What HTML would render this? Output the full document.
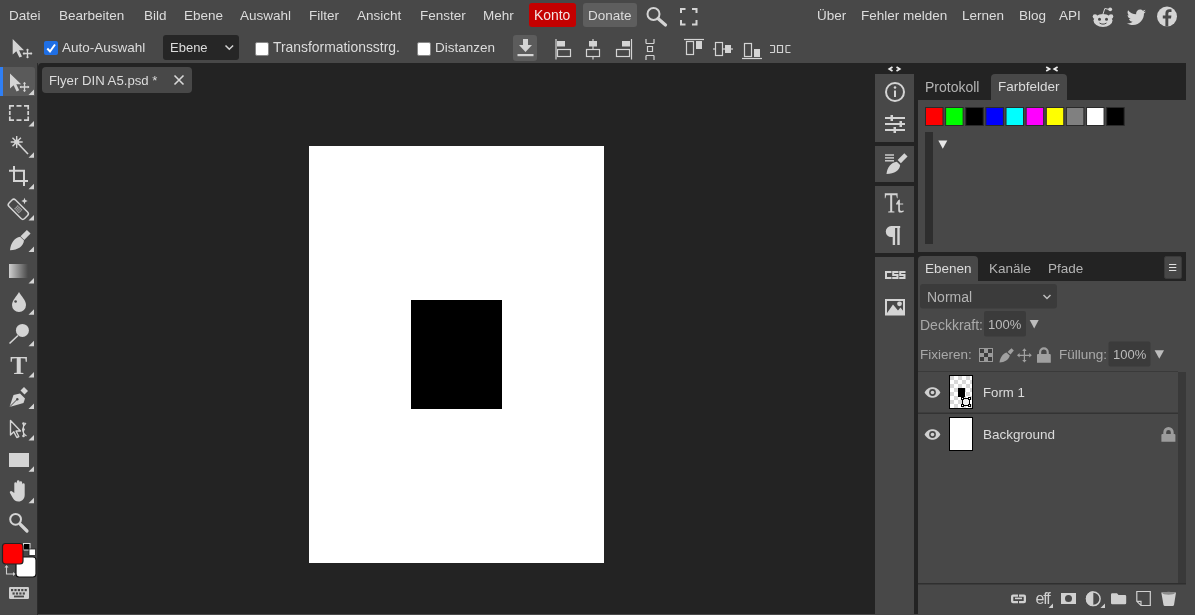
<!DOCTYPE html>
<html><head><meta charset="utf-8">
<style>
*{box-sizing:border-box;margin:0;padding:0}
html,body{width:1195px;height:615px;overflow:hidden}
body{position:relative;background:#484848;font-family:"Liberation Sans",sans-serif;color:#dcdcdc;font-size:13.5px}
.a{position:absolute}
.t{position:absolute;white-space:nowrap;line-height:1;will-change:transform}
svg{position:absolute;overflow:visible;will-change:transform}
#dark{position:absolute;left:38px;top:63px;width:1157px;height:551px;background:#232323;border-top-left-radius:4px}
</style></head><body>

<!-- MENU BAR -->
<div class="t" style="left:9px;top:9px">Datei</div>
<div class="t" style="left:59px;top:9px">Bearbeiten</div>
<div class="t" style="left:144px;top:9px">Bild</div>
<div class="t" style="left:184px;top:9px">Ebene</div>
<div class="t" style="left:240px;top:9px">Auswahl</div>
<div class="t" style="left:309px;top:9px">Filter</div>
<div class="t" style="left:357px;top:9px">Ansicht</div>
<div class="t" style="left:420px;top:9px">Fenster</div>
<div class="t" style="left:483px;top:9px">Mehr</div>
<div class="a" style="left:529px;top:3px;width:47px;height:24px;background:#c40000;border-radius:3px"></div>
<div class="t" style="left:533.5px;top:9px;color:#f4e4e4;font-size:13.9px">Konto</div>
<div class="a" style="left:583px;top:3px;width:54px;height:24px;background:#5e5e5e;border-radius:3px"></div>
<div class="t" style="left:588px;top:9px">Donate</div>

<div class="t" style="left:817px;top:9px">Über</div>
<div class="t" style="left:861px;top:9px">Fehler melden</div>
<div class="t" style="left:962px;top:9px">Lernen</div>
<div class="t" style="left:1019px;top:9px">Blog</div>
<div class="t" style="left:1059px;top:9px">API</div>

<!-- OPTIONS BAR -->
<div class="a" style="left:44px;top:41px;width:14px;height:14px;background:#1f6fe5;border-radius:2px"></div>
<div class="t" style="left:62px;top:41px">Auto-Auswahl</div>
<div class="a" style="left:163px;top:35px;width:76px;height:25px;background:#262626;border-radius:3px"></div>
<div class="t" style="left:170px;top:41px;font-size:13px">Ebene</div>
<div class="a" style="left:255px;top:42px;width:14px;height:14px;background:#fff;border:1px solid #888;border-radius:2px"></div>
<div class="t" style="left:273px;top:41px;font-size:13.9px">Transformationsstrg.</div>
<div class="a" style="left:417px;top:42px;width:14px;height:14px;background:#fff;border:1px solid #888;border-radius:2px"></div>
<div class="t" style="left:435px;top:41px">Distanzen</div>
<div class="a" style="left:513px;top:35px;width:24px;height:26px;background:#5c5c5c;border-radius:3px"></div>


<!-- LEFT TOOLBAR ICONS -->
<svg width="38" height="615" style="left:0;top:0" viewBox="0 0 38 615">
<rect x="0" y="67" width="3" height="29" fill="#2f7ff5"/>
<path d="M3 67H32a3 3 0 0 1 3 3V96H3z" fill="#5a5a5a"/>
<g fill="#d4d4d4">
<path id="tri" d="M34 89.5V95H28.5z"/>
</g>
<g fill="#d4d4d4" id="tris">
<path d="M34 120.9V126.4H28.5z"/><path d="M34 152.3V157.8H28.5z"/><path d="M34 183.7V189.2H28.5z"/>
<path d="M34 215.1V220.6H28.5z"/><path d="M34 246.5V252H28.5z"/><path d="M34 277.9V283.4H28.5z"/>
<path d="M34 309.3V314.8H28.5z"/><path d="M34 340.7V346.2H28.5z"/><path d="M34 372.1V377.6H28.5z"/>
<path d="M34 403.5V409H28.5z"/><path d="M34 434.9V440.4H28.5z"/><path d="M34 466.3V471.8H28.5z"/>
<path d="M34 497.7V503.2H28.5z"/>
</g>
<!-- move -->
<path d="M10 73.5V88.5L13.6 85.2L16.6 91.5L19.2 90.3L16.3 84.3H21.2Z" fill="#d4d4d4"/>
<path d="M24.5 82.5V91.5M20 87H29" stroke="#d4d4d4" stroke-width="1.3" fill="none"/>
<path d="M24.5 82l-1.6 1.8h3.2zM24.5 92l-1.6-1.8h3.2zM19.5 87l1.8-1.6v3.2zM29.5 87l-1.8-1.6v3.2z" fill="#d4d4d4"/>
<!-- marquee -->
<path d="M9.8 109.5V105.8H14M16.5 105.8H21.5M24 105.8H28.2V109.5M28.2 111V115M28.2 116.5V120.2H24M21.5 120.2H16.5M14 120.2H9.8V116.5M9.8 115V111" fill="none" stroke="#d4d4d4" stroke-width="1.7"/>
<!-- wand -->
<path d="M16.7 136V148M10.7 142H22.7M12.5 137.8L20.9 146.2M20.9 137.8L12.5 146.2" stroke="#d4d4d4" stroke-width="1.4"/>
<circle cx="16.7" cy="142" r="2.5" fill="#d4d4d4"/>
<path d="M18 143.5L28 154" stroke="#d4d4d4" stroke-width="1.6"/>
<!-- crop -->
<path d="M14 166V181H28M9 170.7H24V186" stroke="#d4d4d4" stroke-width="2" fill="none"/>
<!-- heal -->
<g transform="translate(18.3 209.3) rotate(-45)">
<rect x="-4.6" y="-11" width="9.2" height="22" rx="2.5" fill="none" stroke="#d4d4d4" stroke-width="1.5"/>
<rect x="-2.6" y="-3.4" width="5.2" height="6.8" fill="#9a9a9a"/>
<path d="M-2.6 -1.7H2.6M-2.6 0H2.6M-2.6 1.7H2.6M-0.9 -3.4V3.4M0.9 -3.4V3.4" stroke="#474747" stroke-width="0.5"/>
</g>
<path d="M24.5 197.8L25.4 200.1L27.7 201L25.4 201.9L24.5 204.2L23.6 201.9L21.3 201L23.6 200.1Z" fill="#d4d4d4"/>
<!-- brush -->
<g transform="translate(25.2 235.3) rotate(45)"><rect x="-2.6" y="-5" width="5.2" height="9" fill="#d4d4d4"/></g>
<path d="M20.2 236.8L24 240.6C23.5 246 18 250.3 10 250.3C10.5 243.5 14.5 237.5 20.2 236.8Z" fill="#d4d4d4"/>
<!-- gradient -->
<defs><linearGradient id="g1" x1="0" x2="1"><stop offset="0" stop-color="#cfcfcf"/><stop offset="1" stop-color="#484848"/></linearGradient></defs>
<rect x="9" y="264" width="19" height="14" fill="url(#g1)"/>
<!-- drop -->
<path d="M19 292C17 296 12 300 12 305A7 7 0 0 0 26 305C26 300 21 296 19 292Z" fill="#d4d4d4"/>
<circle cx="15.6" cy="301.5" r="1.3" fill="#474747"/>
<!-- dodge -->
<circle cx="22.4" cy="330.4" r="6.5" fill="#d4d4d4"/>
<path d="M18 335.5L9.5 343.5" stroke="#d4d4d4" stroke-width="1.6"/>
<!-- hand etc placeholders -->
<rect x="9" y="453" width="20" height="14" fill="#d4d4d4"/>
<!-- zoom -->
<circle cx="15.6" cy="519.3" r="5.4" fill="none" stroke="#d4d4d4" stroke-width="2"/>
<path d="M20.5 524.5L27 531" stroke="#d4d4d4" stroke-width="3.2" stroke-linecap="round"/>
<!-- type -->
<text x="18.8" y="374" font-family="Liberation Serif" font-size="25.5" font-weight="bold" fill="#d4d4d4" text-anchor="middle">T</text>
<!-- pen -->
<path d="M21.5 392.5L25 389L29 393L25.5 396.5Z" fill="#d4d4d4" transform="translate(-1 -2)"/>
<path d="M20 393.5L25 398.5L23.5 403L9.5 407L13.5 395Z" fill="#d4d4d4"/>
<path d="M9.5 407L17 399.5" stroke="#474747" stroke-width="1"/>
<circle cx="17.3" cy="399.2" r="1.2" fill="#474747"/>
<!-- path select -->
<path d="M10.5 420.5V435L13.8 431.8L16.8 437.5L18.8 436.5L16 431H20.5Z" fill="none" stroke="#d4d4d4" stroke-width="1.4" stroke-linejoin="round"/>
<path d="M23.5 423V436M26 423C22 427 21 432 26.5 436" stroke="#d4d4d4" stroke-width="1.1" fill="none"/>
<circle cx="23.5" cy="423.5" r="1.3" fill="#d4d4d4"/><circle cx="23.5" cy="429.5" r="1.3" fill="#d4d4d4"/><circle cx="23.5" cy="436" r="1.3" fill="#d4d4d4"/>
<!-- hand -->
<path d="M14.3 493V483.5a1.3 1.3 0 0 1 2.6 0V491V481.5a1.3 1.3 0 0 1 2.6 0V491V482.5a1.3 1.3 0 0 1 2.6 0V491.5V484.5a1.3 1.3 0 0 1 2.6 0V495C24.6 499 22 501.5 18.5 501.5C15.5 501.5 14 500 12.5 497.5L10 493a1.3 1.3 0 0 1 2.2-1.4Z" fill="#d4d4d4"/>
<!-- colors -->
<rect x="23.5" y="543.5" width="6.5" height="6.5" fill="#000" stroke="#ddd" stroke-width="1"/>
<rect x="29" y="549" width="6.5" height="6.5" fill="#fff" stroke="#222" stroke-width="0.8"/>
<rect x="16" y="557" width="20" height="20" rx="3" fill="#fff" stroke="#111" stroke-width="1.2"/>
<rect x="2.5" y="543.5" width="20.5" height="20.5" rx="3" fill="#f00" stroke="#222" stroke-width="1.2"/>
<path d="M6.5 566.5V574H14" stroke="#cfcfcf" stroke-width="1.1" fill="none"/>
<path d="M6.5 565l-2 2.5h4zM15.5 574l-2.5-2v4z" fill="#cfcfcf"/>
<!-- keyboard -->
<rect x="9" y="587" width="20" height="12" rx="1.2" fill="#cfcfcf"/>
<g fill="#474747"><rect x="11" y="589" width="2.2" height="2.2"/><rect x="14.4" y="589" width="2.2" height="2.2"/><rect x="17.8" y="589" width="2.2" height="2.2"/><rect x="21.2" y="589" width="2.2" height="2.2"/><rect x="24.6" y="589" width="2.2" height="2.2"/>
<rect x="12.5" y="592.4" width="2.2" height="2.2"/><rect x="15.9" y="592.4" width="2.2" height="2.2"/><rect x="19.3" y="592.4" width="2.2" height="2.2"/><rect x="22.7" y="592.4" width="2.2" height="2.2"/>
<rect x="14" y="595.6" width="10" height="1.8"/></g>
</svg>
<div class="a" style="left:37px;top:63px;width:1px;height:552px;background:#2a2a2a"></div>


<!-- OPTIONS + MENU ICONS -->
<svg width="1195" height="63" style="left:0;top:0" viewBox="0 0 1195 63">
<!-- move tool icon -->
<path d="M12.7 39V54.5L16.3 51.2L19.4 57.6L22 56.4L19.1 50.3H24Z" fill="#d4d4d4"/>
<path d="M27.5 49V58M23 53.5H32" stroke="#d4d4d4" stroke-width="1.3" fill="none"/>
<path d="M27.5 48.5l-1.6 1.8h3.2zM27.5 58.5l-1.6-1.8h3.2zM22.5 53.5l1.8-1.6v3.2zM32.5 53.5l-1.8-1.6v3.2z" fill="#d4d4d4"/>
<!-- checkmark -->
<path d="M47.3 48.5L50 51.5L55 44.5" stroke="#fff" stroke-width="2" fill="none"/>
<!-- select chevron -->
<path d="M225.5 45.5L229.3 49.3L233.1 45.5" stroke="#d4d4d4" stroke-width="1.5" fill="none"/>
<!-- download -->
<path d="M523 39H528V45H532L525.5 52L519 45H523Z" fill="#d4d4d4"/>
<rect x="517.5" y="54" width="16" height="2.2" fill="#d4d4d4"/>
<!-- align left -->
<g fill="none" stroke="#d4d4d4" stroke-width="1.2">
<path d="M556 39V59.5"/><rect x="557.5" y="49.5" width="13" height="7"/>
<path d="M593 39V59.5" /><rect x="586.5" y="49.5" width="13" height="7" fill="#474747"/>
<path d="M631.5 39V59.5"/><rect x="616.5" y="49.5" width="13" height="7"/>
<path d="M646 43.5H654M646 43.5V39M654 43.5V39M647.5 46.5H652.5V51.5H647.5Z M646 55.5H654M646 55.5V60M654 55.5V60"/>
<path d="M684 39.5H704"/><rect x="686.5" y="41.5" width="7" height="13"/>
<path d="M713 49H733"/><rect x="715.5" y="42.5" width="7" height="13" fill="#474747"/>
<path d="M742 58.5H762"/><rect x="744.5" y="43.5" width="7" height="13"/>
<path d="M774.5 45.5V52.5M774.5 45.5H770M774.5 52.5H770M777.5 45.5H782.5V52.5H777.5Z M786 45.5V52.5M786 45.5H790.5M786 52.5H790.5"/>
</g>
<g fill="#d4d4d4">
<rect x="557" y="41" width="8" height="5.5"/>
<rect x="589" y="41" width="8" height="5.5"/>
<rect x="622" y="41" width="8" height="5.5"/>
<rect x="696" y="41" width="6" height="8"/>
<rect x="725" y="45" width="6" height="8"/>
<rect x="754" y="49" width="6" height="8"/>
</g>
<!-- search -->
<circle cx="653.5" cy="14" r="6" fill="none" stroke="#d4d4d4" stroke-width="2"/>
<path d="M658 18.5L665.5 25" stroke="#d4d4d4" stroke-width="3.2" stroke-linecap="round"/>
<!-- fullscreen -->
<path d="M681 13V9H685.5M692 9H696.5V13M696.5 20V24.5H692M685.5 24.5H681V20" stroke="#d4d4d4" stroke-width="2" fill="none"/>
<!-- reddit -->
<g fill="#d4d4d4">
<ellipse cx="1103" cy="20.5" rx="9.5" ry="6.5"/>
<circle cx="1095" cy="16.5" r="2.3"/><circle cx="1111" cy="16.5" r="2.3"/>
<circle cx="1110.2" cy="9.3" r="1.9"/>
<path d="M1103 14L1104.8 8.5L1109.5 9.5" stroke="#d4d4d4" stroke-width="1" fill="none"/>
</g>
<circle cx="1099.5" cy="19.2" r="1.5" fill="#474747"/><circle cx="1106.5" cy="19.2" r="1.5" fill="#474747"/>
<path d="M1099.5 23C1101.5 24.5 1104.5 24.5 1106.5 23" stroke="#474747" stroke-width="1" fill="none"/>
<!-- twitter -->
<path transform="translate(1127 8.5) scale(0.8)" fill="#d4d4d4" d="M23.6 3.6c-.9.4-1.8.6-2.8.8 1-.6 1.8-1.6 2.2-2.7-1 .6-2 1-3.1 1.2C19 1.9 17.7 1.3 16.3 1.3c-2.7 0-4.9 2.2-4.9 4.9 0 .4 0 .8.1 1.1C7.4 7.1 3.8 5.1 1.4 2.1 1 2.8.7 3.7.7 4.6c0 1.7.9 3.2 2.2 4.1-.8 0-1.6-.2-2.2-.6v.1c0 2.4 1.7 4.4 3.9 4.8-.4.1-.8.2-1.3.2-.3 0-.6 0-.9-.1.6 2 2.4 3.4 4.6 3.4-1.7 1.3-3.8 2.1-6.1 2.1-.4 0-.8 0-1.2-.1 2.2 1.4 4.8 2.2 7.5 2.2 9.1 0 14-7.5 14-14v-.6c1-.7 1.8-1.6 2.4-2.5z"/>
<!-- facebook -->
<circle cx="1167" cy="16.5" r="10" fill="#d4d4d4"/>
<path d="M1168.3 26.5V18.5H1171L1171.4 15.5H1168.3V13.6C1168.3 12.7 1168.6 12.1 1169.9 12.1H1171.5V9.4C1171.2 9.4 1170.3 9.3 1169.3 9.3C1167 9.3 1165.4 10.7 1165.4 13.3V15.5H1162.8V18.5H1165.4V26.5Z" fill="#474747"/>
</svg>

<!-- DARK AREA -->
<div id="dark"></div>

<!-- DOCUMENT TAB -->
<div class="a" style="left:42px;top:67px;width:150px;height:26px;background:#484848;border-radius:4px"></div>
<div class="t" style="left:49px;top:73.5px;font-size:13.2px">Flyer DIN A5.psd *</div>
<svg width="12" height="12" style="left:173px;top:74px"><path d="M1.5 1.5L10.5 10.5M10.5 1.5L1.5 10.5" stroke="#d8d8d8" stroke-width="1.6"/></svg>

<!-- CANVAS -->
<div class="a" style="left:309px;top:146px;width:295px;height:417px;background:#fff"></div>
<div class="a" style="left:411px;top:300px;width:91px;height:109px;background:#000"></div>

<!-- RIGHT: icon column -->
<div class="a" style="left:875px;top:74px;width:39px;height:68px;background:#484848"></div>
<div class="a" style="left:875px;top:146px;width:39px;height:36px;background:#484848"></div>
<div class="a" style="left:875px;top:186px;width:39px;height:67px;background:#484848"></div>
<div class="a" style="left:875px;top:257px;width:39px;height:358px;background:#484848"></div>

<!-- RIGHT: panels -->
<div class="a" style="left:1186px;top:63px;width:9px;height:552px;background:#484848"></div>
<div class="a" style="left:918px;top:100px;width:268px;height:152px;background:#484848"></div>
<div class="a" style="left:991px;top:74px;width:76px;height:26px;background:#484848;border-radius:4px 4px 0 0"></div>
<div class="t" style="left:925px;top:80px;color:#b4b4b4;font-size:14px">Protokoll</div>
<div class="t" style="left:998px;top:80px">Farbfelder</div>

<div class="a" style="left:918px;top:281px;width:268px;height:334px;background:#484848"></div>
<div class="a" style="left:918px;top:256px;width:60px;height:26px;background:#484848;border-radius:4px 4px 0 0"></div>
<div class="t" style="left:925px;top:262px">Ebenen</div>
<div class="t" style="left:989px;top:262px;color:#b4b4b4">Kanäle</div>
<div class="t" style="left:1048px;top:262px;color:#b4b4b4">Pfade</div>


<!-- RIGHT ICONS -->
<svg width="1195" height="615" style="left:0;top:0" viewBox="0 0 1195 615">
<path d="M892.5 67L889.3 69L892.5 71M896.5 67L899.7 69L896.5 71" stroke="#ececec" stroke-width="1.8" fill="none"/>
<path d="M1046.2 67L1049.6 69L1046.2 71M1057.6 67L1054.2 69L1057.6 71" stroke="#ececec" stroke-width="1.7" fill="none"/>
<g fill="none" stroke="#d4d4d4">
<circle cx="895" cy="92" r="9" stroke-width="2"/>
</g>
<g fill="#d4d4d4">
<circle cx="895" cy="87.5" r="1.3"/><rect x="894" y="90.5" width="2" height="6.5"/>
<rect x="885" y="117" width="20" height="2"/><rect x="885" y="123" width="20" height="2"/><rect x="885" y="129" width="20" height="2"/>
<rect x="890.5" y="115" width="2.5" height="6"/><rect x="899.5" y="121" width="2.5" height="6"/><rect x="893.5" y="127" width="2.5" height="6"/>
<rect x="885" y="154.3" width="9" height="1.4"/><rect x="885" y="157.2" width="9" height="1.4"/><rect x="885" y="160.1" width="9" height="1.4"/>
<g transform="translate(902.2 158.6) rotate(45)"><rect x="-2.3" y="-5.3" width="4.6" height="9.5"/></g>
<path d="M896.8 161.7L900.2 165.1C899.5 170.5 894.5 174 886.5 174C887 167.5 891 162.2 896.8 161.7Z"/>
</g>
<path d="M884.8 193.3H897.6V198.3H897L896.2 195.3H892.2V211.2L894.4 211.6V212.4H888.2V211.6L890.2 211.2V195.3H886.2L885.4 198.3H884.8Z" fill="#d4d4d4"/>
<path d="M898.2 200.2L899.9 199.6V203.4H903.2V204.6H899.9V209.3C899.9 211 901 211.4 903.6 210.6L903.9 211.4C902.5 212.3 901.3 212.6 900.2 212.6C898.7 212.6 898.2 211.7 898.2 210V204.6H896V203.8Z" fill="#d4d4d4"/>
<path d="M892.7 226.1H900.2V228.1H899.7V244.9H897.3V228.1H895.1V244.9H892.7V237H891.2A5.45 5.45 0 0 1 891.2 226.1Z" fill="#d4d4d4"/>
<g fill="#d4d4d4">
<path d="M885 271H891.5V273H887V277H891.5V279H885Z"/>
<path d="M892.2 271H898.5V273H894.2V274H898.5V279H892.2V277H896.5V276H892.2Z"/>
<path d="M899.2 271H905.5V273H901.2V274H905.5V279H899.2V277H903.5V276H899.2Z"/>
</g>
<rect x="886" y="300" width="18" height="14.5" fill="none" stroke="#d4d4d4" stroke-width="2"/>
<path d="M886 314.5L893 304.5L898 310.5L900.5 307.5L904 312V314.5Z" fill="#d4d4d4"/>
<circle cx="899.5" cy="303.8" r="2.4" fill="#d4d4d4"/>
<!-- swatches -->
<rect x="925" y="132" width="8" height="112" fill="#2e2e2e"/>
<path d="M938.3 140.5H947.3L942.8 148.8Z" fill="#e8e8e8"/>
<rect x="925.5" y="107.5" width="17.5" height="18" fill="#ff0000" stroke="#2a2a2a" stroke-width="1"/><rect x="945.63" y="107.5" width="17.5" height="18" fill="#00ff00" stroke="#2a2a2a" stroke-width="1"/><rect x="965.76" y="107.5" width="17.5" height="18" fill="#000000" stroke="#2a2a2a" stroke-width="1"/><rect x="985.89" y="107.5" width="17.5" height="18" fill="#0000ff" stroke="#2a2a2a" stroke-width="1"/><rect x="1006.02" y="107.5" width="17.5" height="18" fill="#00ffff" stroke="#2a2a2a" stroke-width="1"/><rect x="1026.15" y="107.5" width="17.5" height="18" fill="#ff00ff" stroke="#2a2a2a" stroke-width="1"/><rect x="1046.28" y="107.5" width="17.5" height="18" fill="#ffff00" stroke="#2a2a2a" stroke-width="1"/><rect x="1066.41" y="107.5" width="17.5" height="18" fill="#808080" stroke="#2a2a2a" stroke-width="1"/><rect x="1086.54" y="107.5" width="17.5" height="18" fill="#ffffff" stroke="#2a2a2a" stroke-width="1"/><rect x="1106.67" y="107.5" width="17.5" height="18" fill="#000000" stroke="#2a2a2a" stroke-width="1"/>
<!-- LAYERS PANEL -->
<rect x="920" y="284" width="137" height="24.5" rx="3" fill="#3b3b3b"/>
<path d="M1043.5 295L1047 298.5L1050.5 295" stroke="#bdbdbd" stroke-width="1.5" fill="none"/>
<rect x="984" y="311" width="42" height="25.5" rx="2" fill="#3b3b3b"/>
<path d="M1029.7 320H1038.7L1034.2 328.5Z" fill="#bdbdbd"/>
<rect x="1108.5" y="341.5" width="42" height="25" rx="2" fill="#3b3b3b"/>
<path d="M1154.6 350.2H1164L1159.3 358.7Z" fill="#bdbdbd"/>
<!-- lock icons -->
<rect x="979" y="348" width="14" height="14" fill="#9a9a9a"/>
<g fill="#3c3c3c">
<rect x="980" y="349" width="4" height="4"/><rect x="988" y="349" width="4" height="4"/>
<rect x="984" y="353" width="4" height="4"/>
<rect x="980" y="357" width="4" height="4"/><rect x="988" y="357" width="4" height="4"/>
</g>
<g fill="#a0a0a0">
<path d="M1009 350.5L1011.5 348.2L1013.8 350.5L1010.5 354.5L1007.6 352Z"/>
<path d="M1006.5 352.5L1009.8 355.5C1009 359.5 1004.5 362.5 999.5 362.5C1000 357.5 1003 353.5 1006.5 352.5Z"/>
<path d="M1037 362.8V355Q1037 354 1038 354H1039V352.2A4.9 4.9 0 0 1 1048.8 352.2V354H1049.8Q1050.8 354 1050.8 355V362.8Z M1041.2 354H1046.6V352.2A2.7 2.7 0 0 0 1041.2 352.2Z" fill-rule="evenodd"/>
</g>
<path d="M1024.4 350V360.5M1019 355.3H1029.8" stroke="#a0a0a0" stroke-width="1.2"/>
<path d="M1024.4 348.3l-2.2 2.6h4.4zM1024.4 362.5l-2.2-2.6h4.4zM1017 355.3l2.6-2.2v4.4zM1031.8 355.3l-2.6-2.2v4.4z" fill="#a0a0a0"/>
<!-- layer rows -->
<rect x="918" y="371" width="260" height="1" fill="#3a3a3a"/>
<rect x="918" y="412.5" width="260" height="1.5" fill="#333"/>
<rect x="1178" y="372" width="8" height="211" fill="#393939"/>
<rect x="918" y="583" width="268" height="1.5" fill="#2f2f2f"/>
<!-- eyes -->
<g>
<path d="M924.6 392.5C927 388.3 930 387.3 932.5 387.3S938 388.3 940.4 392.5C938 396.7 935 397.7 932.5 397.7S927 396.7 924.6 392.5Z" fill="#d0d0d0"/>
<circle cx="932.5" cy="392.5" r="3.4" fill="#484848"/><circle cx="932.5" cy="392.5" r="1.8" fill="#d0d0d0"/>
<path d="M924.6 434.5C927 430.3 930 429.3 932.5 429.3S938 430.3 940.4 434.5C938 438.7 935 439.7 932.5 439.7S927 438.7 924.6 434.5Z" fill="#d0d0d0"/>
<circle cx="932.5" cy="434.5" r="3.4" fill="#484848"/><circle cx="932.5" cy="434.5" r="1.8" fill="#d0d0d0"/>
</g>
<!-- thumbs -->
<defs><pattern id="chk" x="950" y="376" width="8" height="8" patternUnits="userSpaceOnUse"><rect width="8" height="8" fill="#fff"/><rect width="4" height="4" fill="#d8d8d8"/><rect x="4" y="4" width="4" height="4" fill="#d8d8d8"/></pattern></defs>
<rect x="949.5" y="375.5" width="23" height="33" fill="url(#chk)" stroke="#000" stroke-width="1"/>
<rect x="958" y="388" width="7" height="9" fill="#000"/>
<rect x="962" y="398" width="8" height="8" fill="#eee"/>
<g fill="#000"><rect x="964" y="398" width="4" height="1"/><rect x="964" y="405" width="4" height="1"/><rect x="962" y="400" width="1" height="4"/><rect x="969" y="400" width="1" height="4"/>
<rect x="961" y="397" width="3" height="3"/><rect x="968" y="397" width="3" height="3"/><rect x="961" y="404" width="3" height="3"/><rect x="968" y="404" width="3" height="3"/></g>
<g fill="#fff"><rect x="962" y="398" width="1" height="1"/><rect x="969" y="398" width="1" height="1"/><rect x="962" y="405" width="1" height="1"/><rect x="969" y="405" width="1" height="1"/></g>
<rect x="949.5" y="417.5" width="23" height="33" fill="#fff" stroke="#000" stroke-width="1"/>
<!-- bg lock -->
<path d="M1161.4 441.7V435Q1161.4 434 1162.4 434H1163.3V432.2A5.2 5.2 0 0 1 1173.7 432.2V434H1174.4Q1175.4 434 1175.4 435V441.7Z M1166.2 434H1170.8V432.2A2.3 2.3 0 0 0 1166.2 432.2Z" fill="#9c9c9c" fill-rule="evenodd"/>
<!-- bottom icons -->
<g fill="#d0d0d0">
<path d="M1011 596.5a2 2 0 0 1 2-2H1018v2.3h-4.7v4.1H1018v2.3H1013a2 2 0 0 1-2-2Z"/>
<path d="M1026 596.5a2 2 0 0 0-2-2H1019v2.3h4.7v4.1H1019v2.3H1024a2 2 0 0 0 2-2Z"/>
<rect x="1015" y="597.6" width="7" height="1.6"/>
<path d="M1061 593H1076V604H1061Z M1068.5 595A3.5 3.5 0 1 0 1068.5 602A3.5 3.5 0 1 0 1068.5 595Z" fill-rule="evenodd"/>
<path d="M1093.3 591.3A7.5 7.5 0 0 0 1093.3 606.3Z"/>
<path d="M1111 594.5a1.2 1.2 0 0 1 1.2-1.2H1117l1.5 1.8H1125a1.2 1.2 0 0 1 1.2 1.2V603a1.2 1.2 0 0 1-1.2 1.2H1112.2a1.2 1.2 0 0 1-1.2-1.2Z"/>
<path d="M1161.3 592.5H1176L1174 605a1.5 1.5 0 0 1-1.5 1H1165a1.5 1.5 0 0 1-1.5-1Z"/>
<path d="M1048.5 608H1053V603.5Z"/><path d="M1100.5 608H1105V603.5Z"/>
</g>
<circle cx="1093.3" cy="598.8" r="6.8" fill="none" stroke="#d0d0d0" stroke-width="1.5"/>
<path d="M1136.8 591.5H1150.3V605.5H1141L1136.8 601.3Z M1136.8 601.3H1141V605.5" fill="none" stroke="#d0d0d0" stroke-width="1.2"/>
<ellipse cx="1168.6" cy="593.2" rx="6.2" ry="1.5" fill="#8a8a8a"/>
<text x="1035.5" y="604" font-family="Liberation Sans" font-size="16" fill="#d0d0d0" letter-spacing="-1.2">eff</text>

</svg>

<div class="t" style="left:920px;top:318px;color:#a9a9a9;font-size:14px">Deckkraft:</div>
<div class="t" style="left:988px;top:318px;color:#bcbcbc;font-size:13px">100%</div>
<div class="t" style="left:920px;top:347.5px;color:#a9a9a9">Fixieren:</div>
<div class="t" style="left:1059px;top:347.5px;color:#a9a9a9">Füllung:</div>
<div class="t" style="left:1113px;top:347.5px;color:#bcbcbc;font-size:13px">100%</div>
<div class="t" style="left:927px;top:290px;color:#b4b4b4;font-size:14px">Normal</div>
<div class="t" style="left:983px;top:386px;font-size:13.2px">Form 1</div>
<div class="t" style="left:983px;top:427.5px">Background</div>
<div class="a" style="left:1164px;top:256px;width:18px;height:23px;background:#474747;border-radius:2px;border:1px solid #3a3a3a"></div>
<svg width="18" height="23" style="left:1164px;top:256px"><path d="M5 8.5H12.3M5 11.5H12.3M5 14.5H12.3" stroke="#e0e0e0" stroke-width="1.2"/></svg>
</body></html>
